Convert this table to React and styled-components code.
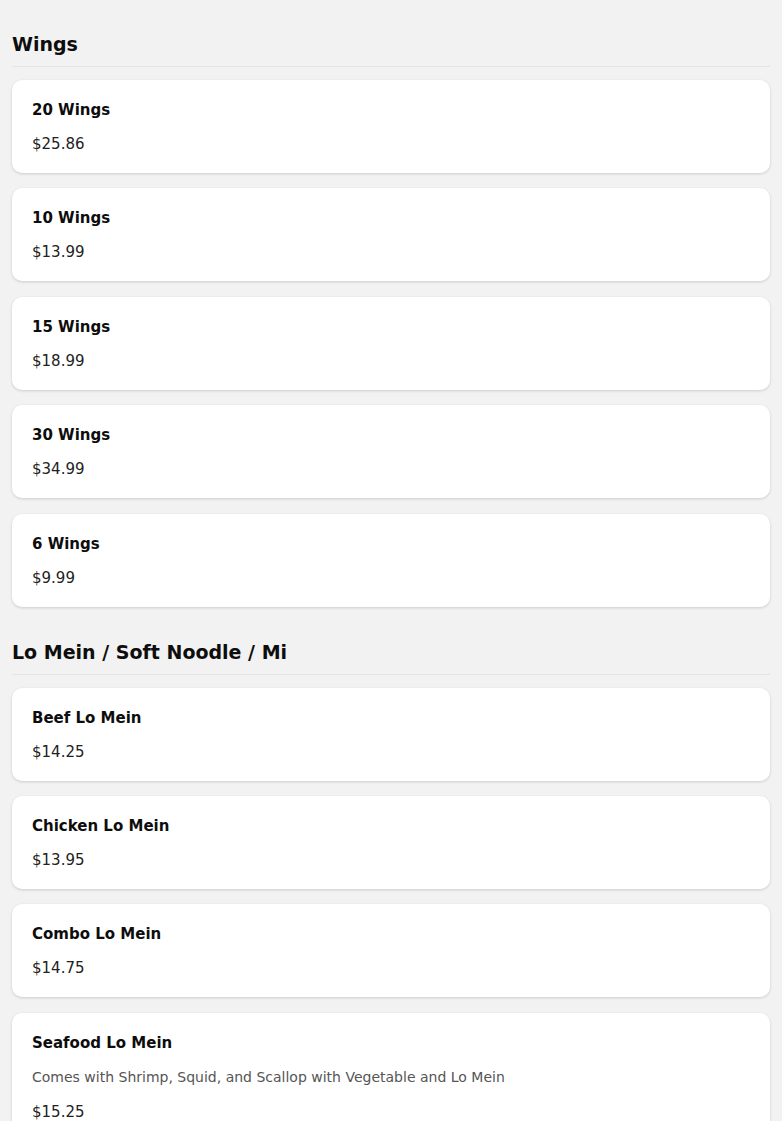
import React from "react";
import styled, { createGlobalStyle } from "styled-components";

const GlobalStyle = createGlobalStyle`
  body {
    margin: 0;
    background: #f2f2f2;
    font-family: "DejaVu Sans", "Noto Sans", sans-serif;
    color: #111;
  }
`;

const menu = [
  {
    name: "Wings",
    items: [
      { name: "20 Wings", price: "$25.86" },
      { name: "10 Wings", price: "$13.99" },
      { name: "15 Wings", price: "$18.99" },
      { name: "30 Wings", price: "$34.99" },
      { name: "6 Wings", price: "$9.99" },
    ],
  },
  {
    name: "Lo Mein / Soft Noodle / Mi",
    items: [
      { name: "Beef Lo Mein", price: "$14.25" },
      { name: "Chicken Lo Mein", price: "$13.95" },
      { name: "Combo Lo Mein", price: "$14.75" },
      {
        name: "Seafood Lo Mein",
        description:
          "Comes with Shrimp, Squid, and Scallop with Vegetable and Lo Mein",
        price: "$15.25",
      },
    ],
  },
];

const App = () => {
  return (
    <Page>
      <GlobalStyle />
      {menu.map((section) => (
        <Section key={section.name}>
          <Heading>{section.name}</Heading>
          <List>
            {section.items.map((item) => (
              <Card key={item.name}>
                <ItemName>{item.name}</ItemName>
                {item.description && <Description>{item.description}</Description>}
                <Price>{item.price}</Price>
              </Card>
            ))}
          </List>
        </Section>
      ))}
    </Page>
  );
};

const Page = styled.div`
  padding: 30px 12px 0;
  display: flex;
  flex-direction: column;
  gap: 31px;
`;

const Section = styled.section`
  display: flex;
  flex-direction: column;
`;

const Heading = styled.h2`
  margin: 0 0 13px;
  padding-bottom: 8px;
  border-bottom: 1px solid #e4e4e4;
  font-size: 19px;
  line-height: 28px;
  font-weight: 700;
  color: #0d0d0d;
`;

const List = styled.div`
  display: flex;
  flex-direction: column;
  gap: 15.4px;
`;

const Card = styled.div`
  background: #fff;
  border-radius: 10px;
  padding: 21px 20px 19px;
  display: flex;
  flex-direction: column;
  gap: 16px;
  box-shadow: 0 1px 3px rgba(0, 0, 0, 0.16);
`;

const ItemName = styled.div`
  font-size: 15px;
  line-height: 18px;
  font-weight: 700;
  color: #0d0d0d;
`;

const Description = styled.div`
  font-size: 14px;
  line-height: 19px;
  font-weight: 400;
  color: #555;
`;

const Price = styled.div`
  font-size: 15px;
  line-height: 19px;
  font-weight: 400;
  color: #222;
`;

export default App;
